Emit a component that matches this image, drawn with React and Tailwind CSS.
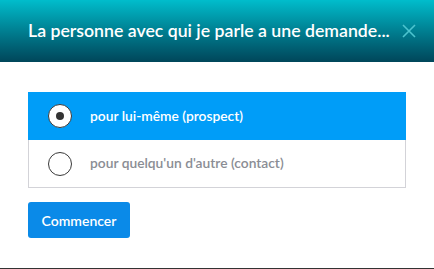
export default function App() {
  const options = [
    { id: "prospect", label: "pour lui-même (prospect)", selected: true },
    { id: "contact", label: "pour quelqu'un d'autre (contact)", selected: false },
  ];

  return (
    <div
      className="w-[434px] h-[269px] bg-white flex flex-col border-b border-[#333] overflow-hidden"
      style={{ fontFamily: "Lato, 'Open Sans', sans-serif" }}
    >
      {/* HEADER */}
      <div className="h-[62px] shrink-0 flex items-center justify-between pl-[28px] pr-[18px] bg-gradient-to-b from-[#00bdcc] to-[#00465a]">
        <h1 className="text-white text-[17.7px] font-semibold whitespace-nowrap">
          La personne avec qui je parle a une demande...
        </h1>
        <svg width="14" height="14" viewBox="0 0 14 14" className="text-[#4cc4cf]">
          <path d="M1 1L13 13M13 1L1 13" stroke="currentColor" strokeWidth="1.6" />
        </svg>
      </div>

      {/* BODY */}
      <div className="px-[28px] pt-[30px]">
        <div className="w-[378px] border border-[#d3d3d8]">
          {options.map((o) => (
            <div
              key={o.id}
              className={`h-[47px] flex items-center pl-[19px] gap-[18px] ${
                o.selected ? "bg-[#009df8] -m-px mb-0 h-[48px] pl-[20px]" : "bg-white"
              }`}
            >
              <span className="w-[24px] h-[24px] rounded-full bg-white border-[1.5px] border-[#3a3a3a] flex items-center justify-center">
                {o.selected && <span className="w-[8px] h-[8px] rounded-full bg-[#333]" />}
              </span>
              <span
                className={`text-[13.8px] font-semibold ${
                  o.selected ? "text-white" : "text-[#8a8d94]"
                }`}
              >
                {o.label}
              </span>
            </div>
          ))}
        </div>

        <button className="mt-[14px] w-[102px] h-[36px] rounded-[3px] bg-[#0a8ae8] text-white text-[14px] font-semibold">
          Commencer
        </button>
      </div>
    </div>
  );
}
